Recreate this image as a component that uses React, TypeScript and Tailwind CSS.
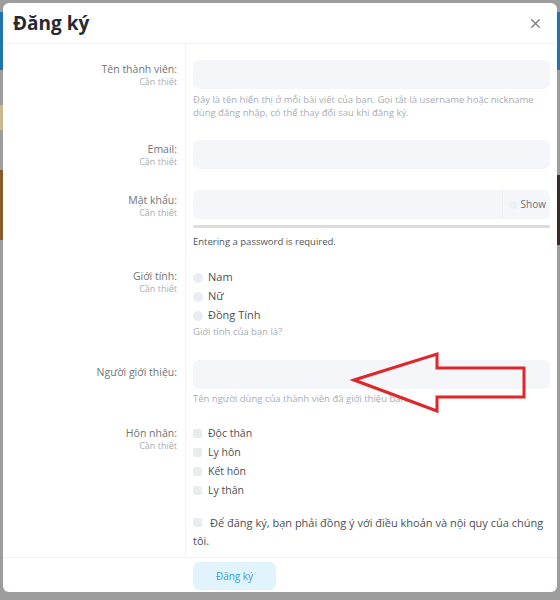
import { X } from "lucide-react";

const font = { fontFamily: '"Open Sans", "Noto Sans", sans-serif' };

const Row = ({
  label,
  required,
  labelPad,
  children,
  className,
}: {
  label?: string;
  required?: boolean;
  labelPad?: string;
  children: React.ReactNode;
  className?: string;
}) => (
  <div className="flex">
    <div className={`w-[183px] shrink-0 border-r border-[#f1f2f4] pr-2 text-right ${labelPad ?? ""}`}>
      {label && <div className="text-[10.5px] leading-[13px] text-[#6f7378]">{label}</div>}
      {required && <div className="text-[9px] leading-[12px] text-[#a9adb2]">Cần thiết</div>}
    </div>
    <div className={`flex-1 px-[7px] ${className ?? ""}`}>{children}</div>
  </div>
);

const Input = ({ children }: { children?: React.ReactNode }) => (
  <div className="flex h-[29px] rounded-md bg-[#f4f6f9]">{children}</div>
);

const Help = ({ children, className }: { children: React.ReactNode; className?: string }) => (
  <p className={`text-[9.5px] leading-[13px] text-[#a7adb4] ${className ?? ""}`}>{children}</p>
);

const Radio = ({ text }: { text: string }) => (
  <div className="flex h-[19px] items-center gap-[5px] text-[11px] text-[#4b4f54]">
    <span className="h-[10px] w-[10px] rounded-full bg-[#e9edf2]" />
    {text}
  </div>
);

const Check = ({ text }: { text: string }) => (
  <div className="flex h-[19px] items-center gap-[6px] text-[10.5px] text-[#4b4f54]">
    <span className="h-[9px] w-[9px] rounded-[2px] bg-[#e9ecef]" />
    {text}
  </div>
);

export default function App() {
  return (
    <div className="relative h-[600px] w-[560px] overflow-hidden bg-[#9d9d9d]" style={font}>
      {/* blurred page behind the modal */}
      <div className="absolute left-0 top-[12px] h-[58px] w-[3px] bg-[#2274ad]" />
      <div className="absolute right-0 top-[12px] h-[58px] w-[3px] bg-[#2274ad]" />
      <div className="absolute left-0 top-[105px] h-[25px] w-[3px] bg-[#c8b98e]" />
      <div className="absolute left-0 top-[170px] h-[70px] w-[3px] bg-[#8a5a2a]" />
      <div className="absolute right-0 top-[175px] h-[70px] w-[3px] bg-[#3a2a2a]" />

      <div className="relative m-[3px] h-[589px] w-[554px] overflow-hidden rounded-md bg-white">
        <div className="flex h-[41px] items-center justify-between border-b border-[#f1f2f4] pl-[10px] pr-[14px]">
          <h1 className="text-[19px] font-bold text-[#262a30]">Đăng ký</h1>
          <X className="h-[15px] w-[15px] text-[#7b7f85]" strokeWidth={2.2} />
        </div>

        <Row label="Tên thành viên:" required labelPad="pt-[19px]" className="pt-[16px] pb-[21px]">
          <Input />
          <Help className="mt-[4px]">
            Đây là tên hiển thị ở mỗi bài viết của bạn. Gọi tắt là username hoặc nickname dùng đăng nhập, có
            thể thay đổi sau khi đăng ký.
          </Help>
        </Row>

        <Row label="Email:" required labelPad="pt-[3px]" className="pb-[21px]">
          <Input />
        </Row>

        <Row label="Mật khẩu:" required labelPad="pt-[4px]" className="pb-[14px]">
          <Input>
            <div className="flex-1" />
            <div className="flex items-center gap-[4px] border-l border-[#eceff3] pl-[6px] pr-[4px] text-[10px] text-[#6b6f75]">
              <span className="h-[8px] w-[8px] rounded-full bg-[#eef0f3]" />
              Show
            </div>
          </Input>
          <div className="mt-[6px] h-[3px] rounded-full bg-[#dcdcdc]" />
          <p className="mt-[8px] text-[9.5px] leading-[12px] text-[#50545a]">Entering a password is required.</p>
        </Row>

        <Row label="Giới tính:" required labelPad="pt-[8px]" className="pt-[6px] pb-[22px]">
          <Radio text="Nam" />
          <Radio text="Nữ" />
          <Radio text="Đồng Tính" />
          <Help>Giới tính của bạn là?</Help>
        </Row>

        <Row label="Người giới thiệu:" labelPad="pt-[6px]" className="pb-[13px]">
          <Input />
          <Help className="mt-[3px]">Tên người dùng của thành viên đã giới thiệu bạn</Help>
        </Row>

        <Row label="Hôn nhân:" required labelPad="pt-[9px]" className="pt-[6px] pb-[14px]">
          <Check text="Độc thân" />
          <Check text="Ly hôn" />
          <Check text="Kết hôn" />
          <Check text="Ly thân" />
        </Row>

        <Row className="pb-[7px]">
          <p className="text-[11px] leading-[18px] text-[#4b4f54]">
            <span className="mr-[8px] inline-block h-[9px] w-[9px] rounded-[2px] bg-[#e9ecef]" />
            Để đăng ký, bạn phải đồng ý với điều khoản và nội quy của chúng tôi.
          </p>
        </Row>

        <div className="flex border-t border-[#f1f2f4] pt-[4px]">
          <div className="w-[190px] shrink-0" />
          <button className="h-[28px] w-[83px] rounded-md bg-[#e1f3fd] text-[10px] text-[#3d9bd3]">Đăng ký</button>
        </div>

        {/* red arrow annotation */}
        <svg className="absolute left-[346px] top-[345px]" width="185" height="70" viewBox="0 0 185 70">
          <polygon
            points="5,32 88,6 88,20 175,20 175,49 88,49 88,63"
            fill="none"
            stroke="#e0262a"
            strokeWidth="3"
            strokeLinejoin="miter"
          />
        </svg>
      </div>
    </div>
  );
}
